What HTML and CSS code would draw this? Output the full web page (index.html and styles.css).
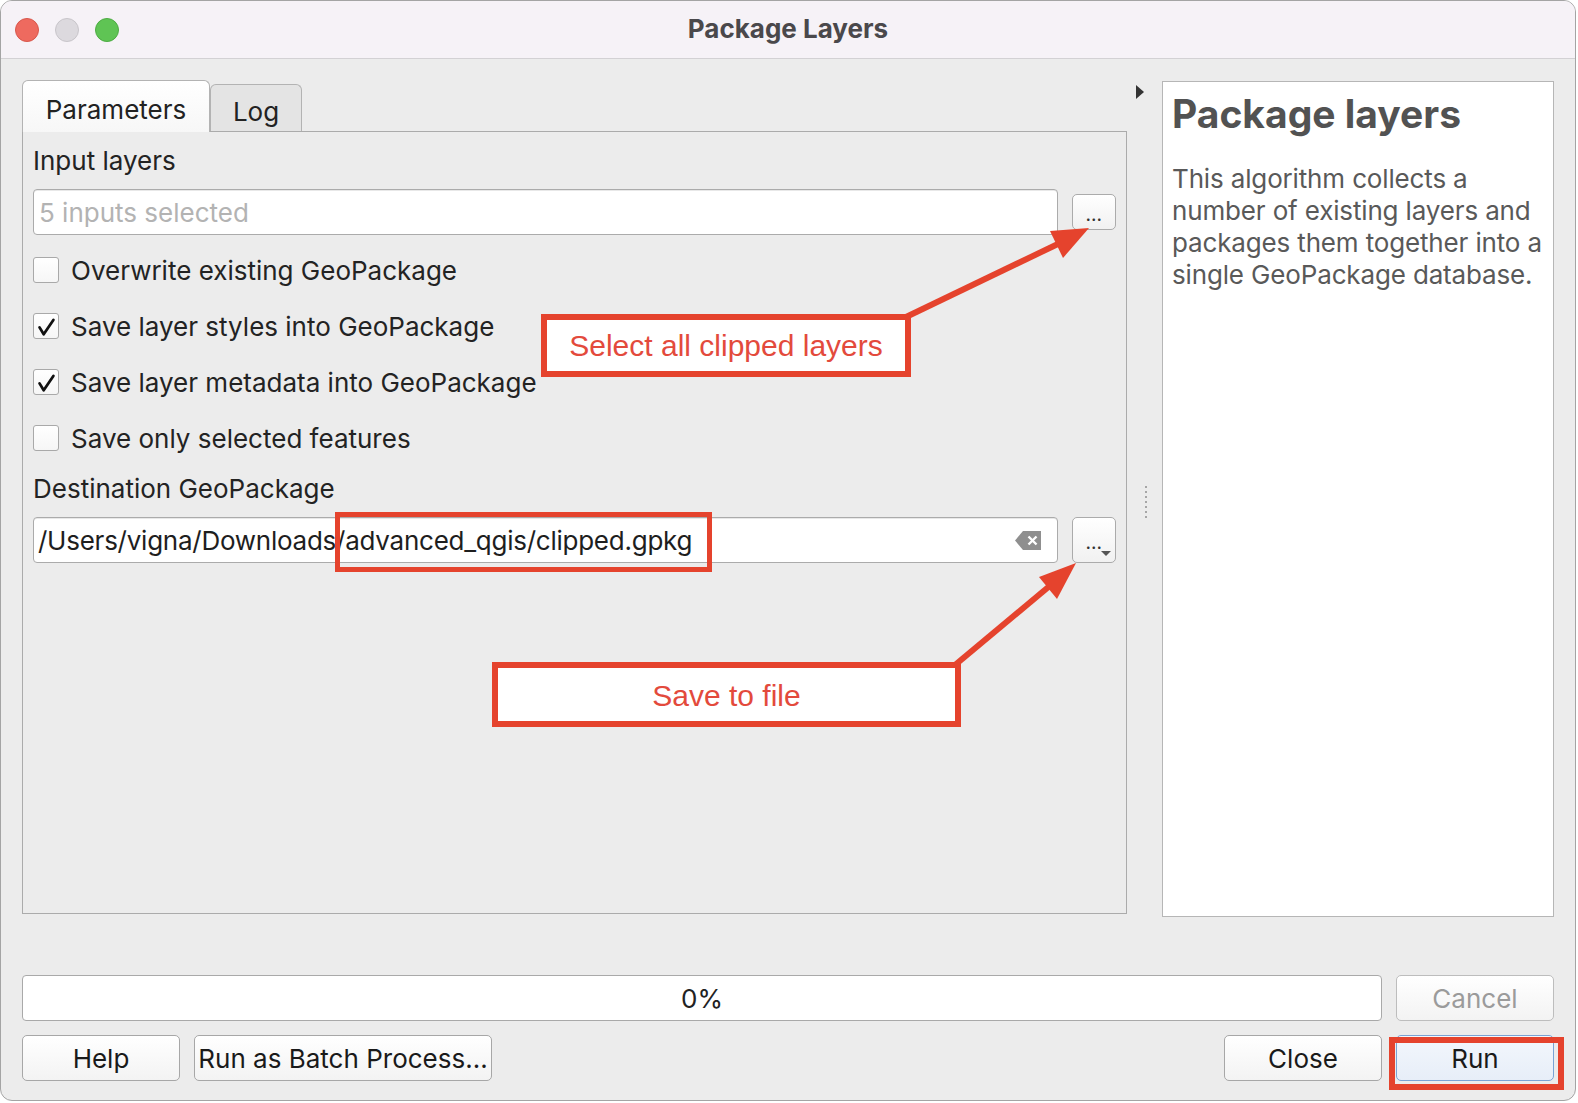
FILE: index.html
```html
<!DOCTYPE html>
<html lang="en">
<head>
<meta charset="utf-8">
<title>Package Layers</title>
<link rel="stylesheet" href="styles.css">
</head>
<body>
<div class="window">
  <header class="titlebar">
    <div class="lights">
      <span class="light red"></span>
      <span class="light gray"></span>
      <span class="light green"></span>
    </div>
    <div class="title">Package Layers</div>
    <div class="spacer"></div>
  </header>

  <main class="content">
    <div class="top">
      <section class="left">
        <div class="tabs">
          <div class="tab active">Parameters</div>
          <div class="tab">Log</div>
        </div>
        <div class="panel">
          <div class="label">Input layers</div>
          <div class="field-row">
            <div class="field placeholder">5 inputs selected</div>
            <button class="dots-btn">...</button>
          </div>
          <div class="check"><span class="box"></span><span>Overwrite existing GeoPackage</span></div>
          <div class="check"><span class="box"><svg class="tick" viewBox="0 0 26 26"><path d="M6 14.5 L10.5 22 L21 6.5"/></svg></span><span>Save layer styles into GeoPackage</span></div>
          <div class="check"><span class="box"><svg class="tick" viewBox="0 0 26 26"><path d="M6 14.5 L10.5 22 L21 6.5"/></svg></span><span>Save layer metadata into GeoPackage</span></div>
          <div class="check"><span class="box"></span><span>Save only selected features</span></div>
          <div class="label dest">Destination GeoPackage</div>
          <div class="field-row tall">
            <div class="field path">
              <span>/Users/vigna/Downloads/advanced_qgis/clipped.gpkg</span>
              <svg class="clear" viewBox="0 0 26 19"><path class="clear-bg" d="M0 9.5 L8 0 H26 V19 H8 Z"/><path class="clear-x" d="M13.5 5.5 L21.5 13.5 M21.5 5.5 L13.5 13.5"/></svg>
            </div>
            <button class="dots-btn menu">...<span class="caret"></span></button>
          </div>
        </div>
      </section>

      <div class="splitter">
        <span class="tri"></span>
        <span class="grip"></span>
      </div>

      <aside class="help">
        <h1>Package layers</h1>
        <p>This algorithm collects a number of existing layers and packages them together into a single GeoPackage database.</p>
      </aside>
    </div>

    <div class="progress-row">
      <div class="progress">0%</div>
      <button class="btn disabled">Cancel</button>
    </div>

    <div class="button-row">
      <button class="btn">Help</button>
      <button class="btn wide">Run as Batch Process...</button>
      <div class="grow"></div>
      <button class="btn">Close</button>
      <button class="btn default">Run</button>
    </div>
  </main>

  <div class="annot a1">Select all clipped layers</div>
  <div class="annot a2">Save to file</div>
  <div class="annot-frame run-hl"></div>
  <div class="annot-frame path-hl"></div>

  <svg class="arrows" viewBox="0 0 1578 1103">
    <line x1="906" y1="317" x2="1060" y2="243"/>
    <polygon points="1089,228 1050,231 1063,258"/>
    <line x1="955" y1="665" x2="1052" y2="584"/>
    <polygon points="1076,563 1039,577 1057,599"/>
  </svg>
</div>
</body>
</html>
```

FILE: styles.css
```css
* { box-sizing: border-box; }

html, body {
  margin: 0;
  padding: 0;
  background: #ffffff;
}

body {
  font-family: "Inter", "Liberation Sans", sans-serif;
  color: #232323;
}

.window {
  position: relative;
  width: 1576px;
  height: 1101px;
  border: 1px solid #a4a4a4;
  border-radius: 12px;
  background: #ececec;
  overflow: hidden;
}

/* ---------- title bar ---------- */
.titlebar {
  height: 58px;
  background: #f6f2f7;
  border-bottom: 1px solid #d3d1d4;
  display: grid;
  grid-template-columns: 1fr auto 1fr;
  align-items: center;
}

.lights {
  display: flex;
  gap: 16px;
  padding-left: 14px;
}

.light {
  width: 24px;
  height: 24px;
  border-radius: 50%;
}

.light.red { background: #ee6a5f; border: 1px solid #d8574c; }
.light.gray { background: #dcd9de; border: 1px solid #c8c5ca; }
.light.green { background: #5fc454; border: 1px solid #4dac43; }

.title {
  font-size: 26px;
  font-weight: 700;
  color: #4a484b;
  padding-bottom: 2px;
}

/* ---------- content ---------- */
.content {
  padding: 21px 21px 0 21px;
}

.top {
  display: flex;
  height: 837px;
}

.left {
  width: 1105px;
  display: flex;
  flex-direction: column;
  padding-bottom: 3px;
}

.tabs {
  height: 51px;
  display: flex;
  align-items: flex-end;
  position: relative;
  z-index: 1;
}

.tab {
  height: 47px;
  width: 92px;
  display: flex;
  align-items: center;
  justify-content: center;
  padding-top: 7px;
  font-size: 26px;
  color: #222;
  background: #e4e4e4;
  border: 1px solid #b3b3b3;
  border-bottom: none;
  border-radius: 6px 6px 0 0;
}

.tab.active {
  width: 188px;
  height: 52px;
  padding-top: 5px;
  background: linear-gradient(#ffffff, #f7f7f7);
  margin-bottom: -1px;
}

.panel {
  flex: 1;
  border: 1px solid #ababab;
  background: #ececec;
  padding: 14px 10px 0 10px;
}

.label {
  font-size: 26px;
  line-height: 30px;
  color: #232323;
}

.label.dest {
  margin-top: 8px;
}

.field-row {
  display: flex;
  align-items: center;
  gap: 14px;
  height: 46px;
  margin-top: 13px;
}

.field {
  flex: 1;
  height: 46px;
  background: #fff;
  border: 1px solid #ababab;
  border-radius: 4px;
  display: flex;
  align-items: center;
  justify-content: space-between;
  padding: 0 16px 0 5px;
  font-size: 26px;
  color: #1e1e1e;
  box-shadow: inset 0 1px 0 #e8e8e8;
}

.field.placeholder {
  color: #b3b3b3;
}

.field.path {
  letter-spacing: -0.25px;
  padding-left: 4px;
}

.dots-btn {
  position: relative;
  width: 44px;
  height: 36px;
  border: 1px solid #ababab;
  border-radius: 5px;
  background: linear-gradient(#ffffff, #f1f1f1);
  font-family: "Inter", "Liberation Sans", sans-serif;
  font-size: 15px;
  font-weight: 700;
  color: #333;
  padding: 6px 0 0 0;
  letter-spacing: 0.5px;
}

.dots-btn.menu {
  height: 46px;
}

.caret {
  position: absolute;
  right: 4px;
  bottom: 6px;
  width: 0;
  height: 0;
  border-left: 5px solid transparent;
  border-right: 5px solid transparent;
  border-top: 5px solid #555;
}

.clear {
  width: 26px;
  height: 19px;
}

.clear-bg { fill: #8f8f8f; }
.clear-x { stroke: #fff; stroke-width: 2.4; fill: none; }

.check {
  height: 56px;
  display: flex;
  align-items: center;
  gap: 12px;
  font-size: 26px;
  color: #232323;
}

.field-row + .check {
  margin-top: 7px;
}

.box {
  width: 26px;
  height: 26px;
  border: 1px solid #a9a9a9;
  border-radius: 3px;
  background: linear-gradient(#ffffff, #f6f6f6);
  display: flex;
  flex: none;
}

.tick {
  width: 24px;
  height: 24px;
}

.tick path {
  fill: none;
  stroke: #111;
  stroke-width: 3;
  stroke-linecap: round;
  stroke-linejoin: round;
}

/* ---------- splitter ---------- */
.splitter {
  width: 35px;
  display: flex;
  flex-direction: column;
  padding: 5px 0 0 9px;
}

.tri {
  width: 0;
  height: 0;
  border-top: 7px solid transparent;
  border-bottom: 7px solid transparent;
  border-left: 8px solid #333;
}

.grip {
  margin: 387px 0 0 9px;
  width: 2px;
  height: 32px;
  background: repeating-linear-gradient(to bottom, #a6a6a6 0 2px, transparent 2px 5px);
}

/* ---------- help panel ---------- */
.help {
  width: 392px;
  height: 836px;
  margin-top: 1px;
  background: #fff;
  border: 1px solid #b6b6b6;
  padding: 8px 4px 8px 9px;
}

.help h1 {
  margin: 0;
  font-size: 39px;
  line-height: 48px;
  font-weight: 700;
  color: #525252;
}

.help p {
  margin: 25px 0 0 0;
  font-size: 26px;
  line-height: 32px;
  letter-spacing: -0.15px;
  color: #595959;
}

/* ---------- bottom rows ---------- */
.progress-row {
  display: flex;
  gap: 14px;
  margin-top: 58px;
  height: 46px;
}

.progress {
  width: 1360px;
  height: 46px;
  background: #fff;
  border: 1px solid #a9a9a9;
  border-radius: 4px;
  display: flex;
  align-items: center;
  justify-content: center;
  font-size: 26px;
  color: #222;
}

.button-row {
  display: flex;
  gap: 14px;
  margin-top: 14px;
  height: 46px;
}

.grow { flex: 1; }

.btn {
  width: 158px;
  height: 46px;
  border: 1px solid #a7a7a7;
  border-radius: 5px;
  background: linear-gradient(#ffffff, #f3f3f3);
  font-family: "Inter", "Liberation Sans", sans-serif;
  font-size: 26px;
  color: #1a1a1a;
  padding: 0;
}

.btn.wide { width: 298px; }

.btn.disabled { color: #9b9b9b; border-color: #bdbdbd; }

.btn.default {
  border-color: #7aa3d4;
  background: linear-gradient(#f3f7fc, #e7eef8);
}

/* ---------- annotations ---------- */
.annot {
  position: absolute;
  background: #fff;
  border: 6px solid #e5432d;
  display: flex;
  align-items: center;
  justify-content: center;
  font-family: "Liberation Sans", Arial, sans-serif;
  font-size: 30px;
  color: #e34a3c;
}

.a1 { left: 540px; top: 313px; width: 370px; height: 63px; }
.a2 { left: 491px; top: 661px; width: 469px; height: 65px; padding-top: 2px; }

.annot-frame {
  position: absolute;
  border: 6px solid #e5432d;
}

.run-hl { left: 1388px; top: 1036px; width: 175px; height: 53px; }
.path-hl { left: 334px; top: 511px; width: 377px; height: 60px; border-width: 5px; }

.arrows {
  position: absolute;
  left: -1px;
  top: -1px;
  width: 1578px;
  height: 1103px;
  pointer-events: none;
}

.arrows line {
  stroke: #e5432d;
  stroke-width: 6;
}

.arrows polygon {
  fill: #e5432d;
}
```
